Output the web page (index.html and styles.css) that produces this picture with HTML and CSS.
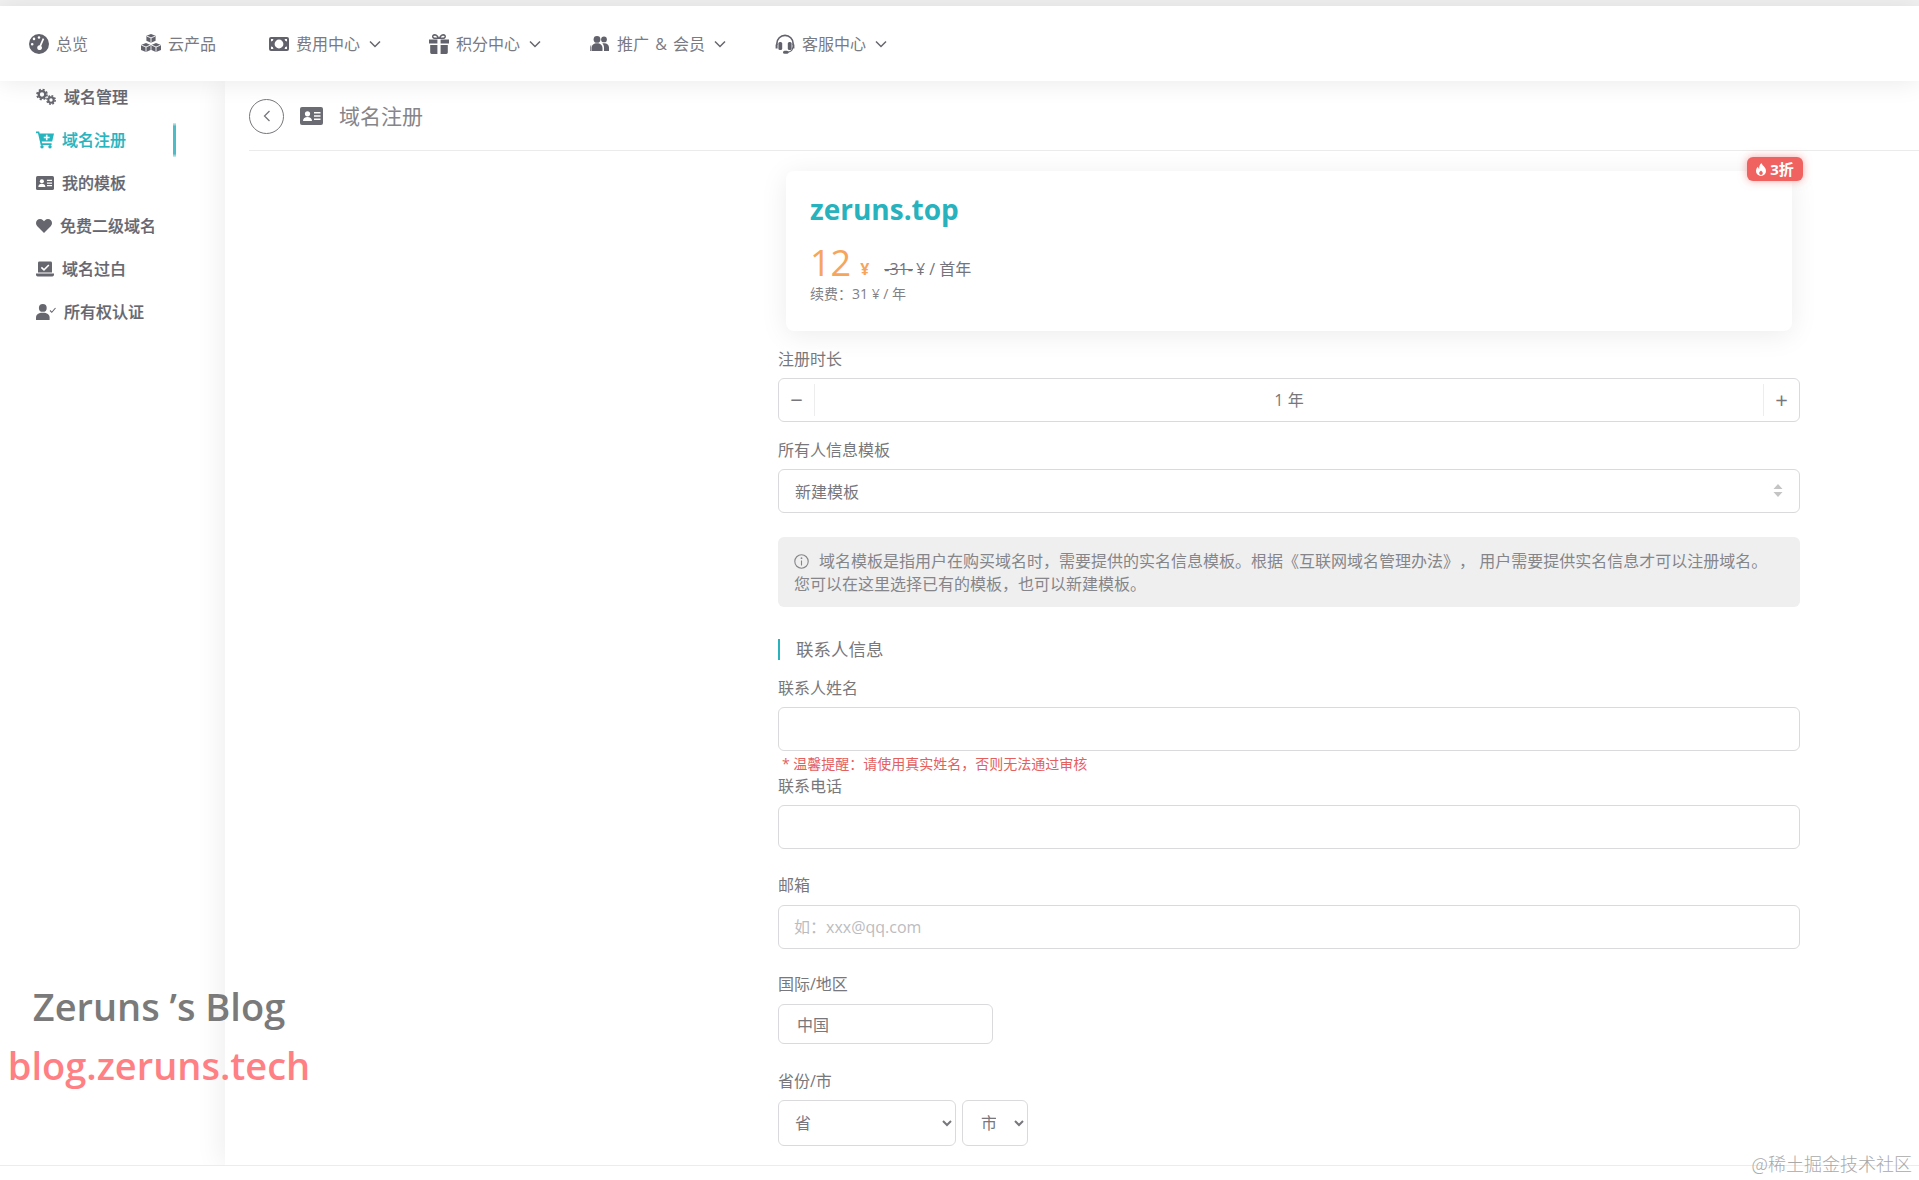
FILE: index.html
```html
<!DOCTYPE html>
<html lang="zh-CN">
<head>
<meta charset="utf-8">
<title>域名注册</title>
<link rel="stylesheet" href="styles.css">
</head>
<body>
<svg class="defs" width="0" height="0" aria-hidden="true">
  <defs>
    <symbol id="i-gauge" viewBox="0 0 20 20"><path fill="currentColor" fill-rule="evenodd" d="M10 0a10 10 0 1 0 0 20a10 10 0 0 0 0-20zM5 3.600a1.300 1.300 0 1 1 0 2.600a1.300 1.300 0 0 1 0-2.600zM3.200 9a1.300 1.300 0 1 1 0 2.600a1.300 1.300 0 0 1 0-2.600zM10 2.200a1.300 1.300 0 1 1 0 2.600a1.300 1.300 0 0 1 0-2.600zM13.700 4.200l1.500.7l-3 7a2.400 2.400 0 1 1-1.600-.6z"/></symbol>
    <symbol id="i-cubes" viewBox="0 0 20 20"><path fill="currentColor" d="M10 0l4.600 1.800v5L10 8.800L5.400 6.800v-5zM5 9l4.600 1.900v5.200L5 18l-5-1.900v-5.200zM15 9l5 1.900v5.200L15 18l-4.600-1.900v-5.200z"/><path fill="none" stroke="#fff" stroke-width=".9" d="M5.600 2l4.400 1.900L14.400 2M10 3.900v4.600M.3 11.100L5 13l4.300-1.900M5 13v4.800M10.700 11.100L15 13l4.700-1.900M15 13v4.800"/></symbol>
    <symbol id="i-money" viewBox="0 0 20 14"><path fill="currentColor" fill-rule="evenodd" d="M2 0h16a2 2 0 0 1 2 2v10a2 2 0 0 1-2 2H2a2 2 0 0 1-2-2V2a2 2 0 0 1 2-2zM10 2.600a4.400 4.400 0 1 0 0 8.800a4.400 4.400 0 0 0 0-8.800zM2 2v2.400A2.400 2.400 0 0 0 4.400 2zM18 2h-2.400A2.400 2.400 0 0 0 18 4.400zM2 12h2.400A2.400 2.400 0 0 0 2 9.600zM18 12V9.600A2.400 2.400 0 0 0 15.600 12z"/></symbol>
    <symbol id="i-gift" viewBox="0 0 20 20"><path fill="currentColor" fill-rule="evenodd" d="M0 5.400h8.400v4.200H0zM11.600 5.400H20v4.200h-8.400zM1.200 11h7.200v9H2.600a1.400 1.400 0 0 1-1.400-1.400zM11.600 11h7.200v7.600a1.400 1.400 0 0 1-1.400 1.400h-5.800zM5.600 0c2 0 3.400 1.600 4.400 3.400C11 1.600 12.400 0 14.400 0c3.200 0 3.600 4.600.2 5H5.400C2 4.600 2.400 0 5.600 0zM5.600 1.800c-1.600 0-1.600 1.600-.1 1.600h2.700c-.8-1.200-1.600-1.600-2.600-1.600zM14.400 1.800c-1 0-1.800.4-2.600 1.600h2.700c1.500 0 1.500-1.600-.1-1.600z"/></symbol>
    <symbol id="i-users" viewBox="0 0 20 15"><g fill="currentColor"><circle cx="7" cy="3.400" r="3.400"/><circle cx="14" cy="3.400" r="2.900"/><path d="M1.500 15v-3c0-3 2.400-4.800 5.500-4.800s5.500 1.800 5.500 4.800v3zM14 15v-3.400c0-1.600-.6-3-1.700-4c.6-.3 1.300-.4 2-.4c2.800 0 4.700 1.700 4.700 4.400V15zM0 15v-2.500c0-1.600.4-2.900 1.300-3.800C.7 10.500.6 13 .8 15z"/></g></symbol>
    <symbol id="i-headset" viewBox="0 0 20 20"><path fill="none" stroke="currentColor" stroke-width="1.700" d="M1.900 11V9.500a8.100 8.100 0 0 1 16.200 0V11"/><path fill="none" stroke="currentColor" stroke-width="1.200" d="M17.600 13.500c0 2.800-2.400 4.600-5 4.600"/><g fill="currentColor"><rect x="3.400" y="8" width="3.800" height="8" rx="1.500"/><rect x="12.800" y="8" width="3.800" height="8" rx="1.500"/><rect x="8" y="16.800" width="5.500" height="3" rx="1.500"/><path d="M.6 10.500h2v4h-2zM17.400 10.500h2v4h-2z"/></g></symbol>
    <symbol id="i-cogs" viewBox="0 0 20 16"><g fill="none" stroke="currentColor"><circle cx="6" cy="5.500" r="3.300" stroke-width="2.300"/><circle cx="6" cy="5.500" r="5" stroke-width="1.700" stroke-dasharray="2.100 1.830"/><circle cx="15" cy="11" r="2.700" stroke-width="2.100"/><circle cx="15" cy="11" r="4.200" stroke-width="1.500" stroke-dasharray="1.800 1.500"/></g></symbol>
    <symbol id="i-cart" viewBox="0 0 18 17"><path fill="currentColor" fill-rule="evenodd" d="M0 0h3.200l.5 2H18l-1.800 8H5.700l.4 1.800h9.500v1.700H4.700L2 1.700H0zM9.900 3.200v2H7.800v1.600h2.100v2h1.600v-2h2.100V5.200h-2.100v-2z"/><circle fill="currentColor" cx="6" cy="15.300" r="1.700"/><circle fill="currentColor" cx="14" cy="15.300" r="1.700"/></symbol>
    <symbol id="i-card" viewBox="0 0 23 18"><rect width="23" height="18" rx="2" fill="currentColor"/><g fill="#fff"><circle cx="7.500" cy="6.800" r="2.600"/><path d="M3 14c0-2.800 2-4 4.500-4s4.500 1.200 4.500 4zM14 5h6.500v1.500H14zM14 8.300h6.500v1.500H14zM14 11.600h6.500v1.500H14z"/></g></symbol>
    <symbol id="i-heart" viewBox="0 0 16 14"><path fill="currentColor" d="M8 14L1.300 7.300C-.4 5.600-.4 2.900 1.100 1.300c1.600-1.700 4.300-1.700 5.900 0L8 2.300l1-1c1.600-1.700 4.300-1.700 5.900 0c1.500 1.600 1.500 4.300-.2 6z"/></symbol>
    <symbol id="i-laptop" viewBox="0 0 18 15"><path fill="currentColor" fill-rule="evenodd" d="M3.400 0h11.200A1.400 1.400 0 0 1 16 1.400V11H2V1.400A1.400 1.400 0 0 1 3.400 0zM12.300 3L8 7.300L5.900 5.300L4.800 6.400L8 9.500l5.400-5.400zM0 12h18v1.300A1.700 1.700 0 0 1 16.300 15H1.700A1.700 1.700 0 0 1 0 13.300z"/></symbol>
    <symbol id="i-usercheck" viewBox="0 0 20 16"><g fill="currentColor"><circle cx="6.800" cy="3.900" r="3.900"/><path d="M0 16v-2.400C0 10.500 2.500 8.800 6.800 8.800s6.800 1.700 6.800 4.800V16z"/></g><path fill="none" stroke="currentColor" stroke-width="1.100" d="M14 6.500l1.800 1.800L19.500 4"/></symbol>
    <symbol id="i-chev" viewBox="0 0 12 8"><path fill="none" stroke="currentColor" stroke-width="1.500" d="M1 1.500l5 5l5-5"/></symbol>
  </defs>
</svg>

<div class="topstrip"></div>
<nav class="navbar">
  <a class="nav-item"><svg class="ni ni-r"><use href="#i-gauge"/></svg>总览</a>
  <a class="nav-item"><svg class="ni ni-r"><use href="#i-cubes"/></svg>云产品</a>
  <a class="nav-item has-sub tuck"><svg class="ni ni-m"><use href="#i-money"/></svg>费用中心<svg class="chev"><use href="#i-chev"/></svg></a>
  <a class="nav-item has-sub"><svg class="ni ni-r"><use href="#i-gift"/></svg>积分中心<svg class="chev"><use href="#i-chev"/></svg></a>
  <a class="nav-item has-sub spaced"><svg class="ni ni-u"><use href="#i-users"/></svg>推广 &amp; 会员<svg class="chev"><use href="#i-chev"/></svg></a>
  <a class="nav-item has-sub"><svg class="ni ni-r"><use href="#i-headset"/></svg>客服中心<svg class="chev"><use href="#i-chev"/></svg></a>
</nav>

<div class="layout">
  <aside class="sidebar">
    <a class="side-item"><svg class="si si-20"><use href="#i-cogs"/></svg>域名管理</a>
    <a class="side-item active"><svg class="si si-18"><use href="#i-cart"/></svg>域名注册</a>
    <a class="side-item"><svg class="si si-18"><use href="#i-card"/></svg>我的模板</a>
    <a class="side-item"><svg class="si si-16"><use href="#i-heart"/></svg>免费二级域名</a>
    <a class="side-item"><svg class="si si-18"><use href="#i-laptop"/></svg>域名过白</a>
    <a class="side-item"><svg class="si si-20"><use href="#i-usercheck"/></svg>所有权认证</a>
  </aside>

  <main class="content">
    <header class="page-head">
      <button class="back" type="button"><svg width="8" height="12" viewBox="0 0 8 12"><path fill="none" stroke="currentColor" stroke-width="1.300" d="M6.500 1L1.500 6l5 5"/></svg></button>
      <svg class="head-icon"><use href="#i-card"/></svg>
      <h1 class="page-title">域名注册</h1>
    </header>

    <div class="form">
      <section class="card">
        <span class="badge"><svg width="10" height="13" viewBox="0 0 10 13"><path fill="#fff" fill-rule="evenodd" d="M5.400 0c.4 2.200 4.600 4 4.600 8a5 5 0 0 1-10 0c0-1.800.9-3.300 2-4.200c.1 1 .5 1.700 1.200 2.100C3 3.800 3.700 1.500 5.400 0zM5 7.500c-1 1-1.800 1.500-1.800 2.700a1.800 1.800 0 0 0 3.600 0C6.800 9 6 8.500 5 7.500z"/></svg>3折</span>
        <div class="domain">zeruns.top</div>
        <div class="price-row"><span class="price">12</span><span class="yen">¥</span><span class="old"><s>-31-</s>¥ / 首年</span></div>
        <div class="renew">续费&#xFF1A;31 ¥ / 年</div>
      </section>

      <label class="label first">注册时长</label>
      <div class="stepper">
        <span class="step-btn">−</span><span class="step-sep"></span>
        <span class="step-val">1 年</span>
        <span class="step-sep"></span><span class="step-btn">+</span>
      </div>

      <label class="label">所有人信息模板</label>
      <div class="select-wrap">
        <select class="control plain"><option>新建模板</option></select>
        <svg class="updown" width="10" height="13" viewBox="0 0 10 13"><path fill="#c4c4c4" d="M5 0l4.500 5H.5zM5 13L.5 8h9z"/></svg>
      </div>

      <div class="alert">
        <svg class="alert-icon" width="15" height="15" viewBox="0 0 15 15"><g fill="none" stroke="currentColor" stroke-width="1.100"><circle cx="7.500" cy="7.500" r="6.700"/><path d="M7.500 6.500v5"/></g><circle cx="7.500" cy="4.200" r=".9" fill="currentColor"/></svg>域名模板是指用户在购买域名时&#xFF0C;需要提供的实名信息模板。根据《互联网域名管理办法》&#xFF0C; 用户需要提供实名信息才可以注册域名。您可以在这里选择已有的模板&#xFF0C;也可以新建模板。
      </div>

      <h2 class="section">联系人信息</h2>

      <label class="label">联系人姓名</label>
      <input class="control" type="text">
      <p class="hint">* 温馨提醒&#xFF1A;请使用真实姓名&#xFF0C;否则无法通过审核</p>

      <label class="label tight">联系电话</label>
      <input class="control" type="text">

      <label class="label wide">邮箱</label>
      <input class="control" type="text" placeholder="如&#xFF1A;xxx@qq.com">

      <label class="label mid">国际/地区</label>
      <input class="control country" type="text" value="中国">

      <label class="label last">省份/市</label>
      <div class="region">
        <select class="control sel-prov"><option>省</option></select>
        <select class="control sel-city"><option>市</option></select>
      </div>
    </div>
  </main>
</div>
<footer class="foot"></footer>

<div class="wm-blog"><div class="wm-name">Zeruns ’s Blog</div><div class="wm-url">blog.zeruns.tech</div></div>
<div class="wm-juejin">@稀土掘金技术社区</div>
</body>
</html>
```

FILE: styles.css
```css
* { box-sizing: border-box; }
html, body { margin: 0; height: 1180px; overflow: hidden; }
body {
  position: relative;
  background: #fff;
  color: #6e6e76;
  font: 400 16px/22px "Open Sans", "Noto Sans CJK SC", sans-serif;
}
.defs { position: absolute; }

.topstrip { height: 6px; background: #f1f1f2; }

.navbar {
  position: relative;
  z-index: 3;
  display: flex;
  align-items: center;
  gap: 53px;
  height: 75px;
  padding: 0 0 0 29px;
  background: #fff;
  box-shadow: 0 1px 24px rgba(0, 0, 0, .09);
}
.nav-item { display: flex; align-items: center; color: #7a7a82; }
.nav-item.has-sub { margin-right: -4px; }
.nav-item.tuck { margin-right: -5px; }
.nav-item.spaced { word-spacing: 2px; }
.ni { color: #62626c; margin-right: 7px; height: 20px; width: 20px; flex: none; }
.ni-m { height: 14px; }
.ni-u { height: 15px; }
.chev { width: 12px; height: 8px; margin-left: 9px; color: #66666e; }

.layout { display: flex; height: 1084px; overflow: hidden; }

.sidebar {
  flex: none;
  width: 225px;
  padding: 0 0 0 36px;
  margin-top: -1px;
  background: #fff;
}
.side-item {
  display: flex;
  align-items: center;
  width: 140px;
  height: 34px;
  margin-bottom: 9px;
  color: #66666f;
  font-weight: 500;
  -webkit-text-stroke: .2px currentColor;
  white-space: nowrap;
}
.side-item.active {
  color: #26b5bf;
  border-right: 3px solid #4dbcc6;
  border-image: linear-gradient(transparent, #4dbcc6 12%, #4dbcc6 88%, transparent) 1;
}
.si { margin-right: 8px; flex: none; height: 20px; }
.si-20 { width: 20px; }
.si-18 { width: 18px; }
.si-16 { width: 16px; }

.content {
  position: relative;
  z-index: 2;
  flex: 1;
  padding-left: 24px;
  background: #fff;
  box-shadow: -4px 0 26px rgba(0, 0, 0, .07);
}
.page-head {
  display: flex;
  align-items: center;
  height: 70px;
  padding-top: 1px;
  border-bottom: 1px solid #ebebeb;
}
.back {
  display: flex;
  align-items: center;
  justify-content: center;
  width: 35px;
  height: 35px;
  padding: 0;
  margin-right: 16px;
  background: #fff;
  border: 1px solid #77777c;
  border-radius: 50%;
  color: #77777c;
}
.head-icon { width: 23px; height: 18px; color: #6b6b73; margin-right: 16px; }
.page-title { margin: 0; font-size: 21px; line-height: 28px; font-weight: 400; color: #85858a; }

.form { width: 1022px; margin-left: 529px; }

.card {
  position: relative;
  height: 160px;
  margin: 20px 8px 0 8px;
  padding: 18px 24px 0;
  border-radius: 8px;
  background: #fff;
  box-shadow: 0 4px 28px rgba(0, 0, 0, .08);
}
.badge {
  position: absolute;
  top: -14px;
  right: -11px;
  display: flex;
  align-items: center;
  justify-content: center;
  gap: 4px;
  width: 56px;
  height: 24px;
  border-radius: 6px;
  background: #ef625f;
  box-shadow: 0 0 8px rgba(239, 98, 95, .55);
  color: #fff;
  font-size: 15px;
  font-weight: 700;
}
.domain { color: #27b2bd; font-size: 28px; line-height: 40px; font-weight: 700; }
.price-row { margin-top: 16px; height: 36px; line-height: 36px; white-space: nowrap; }
.price { color: #f6a55b; font-size: 36px; font-weight: 400; }
.yen { margin-left: 9px; color: #f6a55b; font-weight: 700; vertical-align: 1px; }
.old { margin-left: 15px; color: #74747a; vertical-align: 1px; }
.old s { margin-right: 3px; }
.renew { margin-top: 3px; font-size: 14px; line-height: 20px; color: #808086; }

.label { display: block; height: 22px; margin: 17px 0 8px; color: #77777c; }
.label.first { margin-top: 17px; }
.label.tight { margin-top: 2px; }
.label.wide { margin: 25px 0 9px; }
.label.mid { margin: 24px 0 9px; }
.label.last { margin: 26px 0 8px; }

.control {
  display: block;
  width: 100%;
  height: 44px;
  padding: 0 15px;
  color: #77777c;
  background: #fff;
  border: 1px solid #dadadd;
  border-radius: 6px;
  font: inherit;
  outline: none;
}
.control::placeholder { color: #bcbcbf; opacity: 1; }

.stepper {
  display: flex;
  align-items: center;
  height: 44px;
  border: 1px solid #dadadd;
  border-radius: 6px;
}
.step-btn { flex: none; width: 35px; margin-top: -2px; text-align: center; font-size: 22px; line-height: 20px; color: #77777c; }
.step-sep { flex: none; width: 1px; height: 32px; background: #ededed; }
.step-val { flex: 1; text-align: center; color: #77777c; }

.select-wrap { position: relative; }
.plain { appearance: none; padding: 2px 16px 0; }
.updown { position: absolute; right: 17px; top: 15px; }

.alert {
  margin-top: 24px;
  height: 70px;
  padding: 13px 20px 0 16px;
  background: #efefef;
  border-radius: 6px;
  color: #85858a;
  line-height: 23px;
  text-spacing-trim: space-all;
}
.alert-icon { margin: 0 10px 0 0; vertical-align: -2px; }

.section {
  margin: 32px 0 0;
  height: 21px;
  padding-left: 16px;
  border-left: 2px solid #27b2bd;
  font-size: 17.5px;
  line-height: 20px;
  font-weight: 400;
  color: #77777c;
}

.hint { margin: 4px 0 0 4px; height: 18px; font-size: 14px; line-height: 18px; color: #e4605f; }

.country { width: 215px; height: 40px; padding-left: 18px; }

.region { display: flex; gap: 6px; }
.sel-prov { width: 178px; height: 46px; padding-left: 12px; }
.sel-city { width: 66px; height: 46px; padding-left: 14px; }

.foot { height: 15px; border-top: 1px solid #ececec; background: #fff; position: relative; z-index: 3; }

.wm-blog {
  position: absolute;
  left: 0;
  top: 977px;
  z-index: 5;
  width: 318px;
  text-align: center;
  font-size: 38px;
  line-height: 59px;
  font-weight: 600;
}
.wm-name { color: #7a7a7a; }
.wm-url { color: #ff8084; }

.wm-juejin {
  position: absolute;
  right: 7px;
  bottom: 5px;
  z-index: 5;
  font-size: 18px;
  line-height: 24px;
  font-weight: 300;
  color: #a9a9a9;
  font-family: "Noto Sans CJK SC", sans-serif;
}
```
